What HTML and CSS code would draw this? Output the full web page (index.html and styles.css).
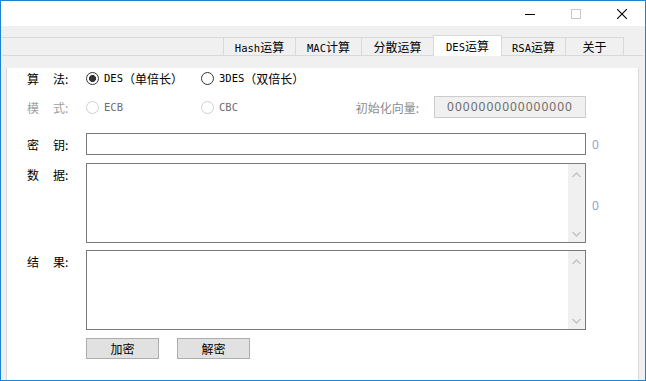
FILE: index.html
```html
<!DOCTYPE html>
<html lang="zh-CN">
<head>
    <meta charset="UTF-8">
    <meta name="viewport" content="width=device-width, initial-scale=1.0">
    <title>DES运算</title>
    <link rel="stylesheet" href="styles.css">
</head>
<body>
<div class="win">
    <div class="titlebar">
        <span class="tb-btn"><svg width="10" height="10"><path d="M0 5.5H10" stroke="#000"/></svg></span>
        <span class="tb-btn"><svg width="10" height="10"><rect x="0.5" y="0.5" width="9" height="9" fill="none" stroke="#c8c8c8"/></svg></span>
        <span class="tb-btn"><svg width="10" height="10"><path d="M0 0L10 10M10 0L0 10" stroke="#000" stroke-width="1.1"/></svg></span>
    </div>

    <div class="tabbar">
        <div class="tab-fill"></div>
        <div class="tab t-hash"><span class="en">Hash</span>运算</div>
        <div class="tab t-mac"><span class="en">MAC</span>计算</div>
        <div class="tab t-div">分散运算</div>
        <div class="tab t-des active"><span class="en">DES</span>运算</div>
        <div class="tab t-rsa"><span class="en">RSA</span>运算</div>
        <div class="tab t-about">关于</div>
        <div class="tab-end"></div>
    </div>

    <div class="panel">
        <div class="row r-alg">
            <span class="lbl"><i>算</i><i>法</i>:</span>
            <div class="field opts">
                <span class="opt"><span class="radio on"></span><span class="en">DES</span>（单倍长）</span>
                <span class="opt"><span class="radio"></span><span class="en">3DES</span>（双倍长）</span>
            </div>
        </div>

        <div class="row r-mode">
            <span class="lbl off"><i>模</i><i>式</i>:</span>
            <div class="field opts">
                <span class="opt off"><span class="radio"></span><span class="en">ECB</span></span>
                <span class="opt off"><span class="radio"></span><span class="en">CBC</span></span>
                <span class="iv-lbl">初始化向量:</span>
                <span class="iv">0000000000000000</span>
            </div>
        </div>

        <div class="row r-key">
            <span class="lbl"><i>密</i><i>钥</i>:</span>
            <div class="field input"></div>
            <span class="count">0</span>
        </div>

        <div class="row r-data">
            <span class="lbl"><i>数</i><i>据</i>:</span>
            <div class="field area">
                <div class="sbar">
                    <svg width="9" height="6"><polyline points="0.5,5 4.5,1 8.5,5" fill="none" stroke="#c4c4c4" stroke-width="1.5"/></svg>
                    <svg width="9" height="6"><polyline points="0.5,1 4.5,5 8.5,1" fill="none" stroke="#c4c4c4" stroke-width="1.5"/></svg>
                </div>
            </div>
            <span class="count mid">0</span>
        </div>

        <div class="row r-res">
            <span class="lbl"><i>结</i><i>果</i>:</span>
            <div class="field area">
                <div class="sbar">
                    <svg width="9" height="6"><polyline points="0.5,5 4.5,1 8.5,5" fill="none" stroke="#c4c4c4" stroke-width="1.5"/></svg>
                    <svg width="9" height="6"><polyline points="0.5,1 4.5,5 8.5,1" fill="none" stroke="#c4c4c4" stroke-width="1.5"/></svg>
                </div>
            </div>
        </div>

        <div class="row r-btns">
            <button class="btn">加密</button>
            <button class="btn">解密</button>
        </div>
    </div>
</div>
</body>
</html>
```

FILE: styles.css
```css
html,body{margin:0;padding:0;height:100%;width:100%;}
body{
    background:#f0f0f0;
    font-family:"Noto Sans CJK SC","Noto Sans",sans-serif;
    font-size:12px;
    color:#000;
    user-select:none;
}
.win{
    width:646px;height:381px;
    box-sizing:border-box;
    border:1px solid #1883d7;
    background:#f0f0f0;
    overflow:hidden;
}
.en{font-family:"DejaVu Sans Mono",monospace;font-size:10.5px;}

/* title bar */
.titlebar{height:25px;background:#fff;display:flex;justify-content:flex-end;}
.tb-btn{width:46px;display:flex;align-items:center;justify-content:center;}
.tb-btn svg{display:block;}

/* tabs */
.tabbar{
    display:flex;
    margin:11px 2px 0 1px;
    height:18px;
    border-bottom:1px solid #d9d9d9;
}
.tab-fill{flex:1;border-top:1px solid #d9d9d9;}
.tab-end{width:19px;flex:none;}
.tab{
    flex:none;
    box-sizing:border-box;
    text-align:center;
    line-height:17px;
    border-top:1px solid #d9d9d9;
    border-left:1px solid #d9d9d9;
    background:#f0f0f0;
    white-space:nowrap;
}
.t-hash{width:72px;}
.t-mac{width:66px;}
.t-div{width:72px;}
.t-des{width:69px;}
.t-rsa{width:63px;border-left:none;}
.t-about{width:59px;border-right:1px solid #d9d9d9;}
.tab.active{
    position:relative;
    z-index:1;
    background:#fff;
    margin:-2px 0 -1px 0;
    line-height:19px;
    border-right:1px solid #d9d9d9;
}

/* panel */
.panel{
    margin:0 6px 0 5px;
    height:317px;
    background:#fff;
    border:1px solid #d9d9d9;
    border-top:none;
    padding-left:20px;
}
.row{display:flex;align-items:center;}
.lbl{width:59px;flex:none;white-space:nowrap;}
.lbl i{font-style:normal;}
.lbl i:first-child{margin-right:14px;}
.lbl.off{color:#a0a0a0;}
.field{width:500px;flex:none;box-sizing:border-box;}
.count{margin-left:6px;color:#8fa3cb;font-family:"Noto Sans",sans-serif;}

.r-alg{margin-top:12px;height:20px;}
.r-mode{margin-top:8px;height:22px;}
.r-key{margin-top:15px;height:22px;}
.r-data{margin-top:8px;height:80px;align-items:flex-start;}
.r-res{margin-top:7px;height:80px;align-items:flex-start;}
.r-btns{margin-top:8px;padding-left:59px;gap:18px;}

.r-data .lbl,.r-res .lbl{padding-top:3px;}
.count.mid{align-self:center;margin-top:4px;}

.opts{display:flex;align-items:center;height:100%;}
.opt{width:115px;display:flex;align-items:center;white-space:nowrap;}
.opt.off{color:#6d6d6d;}
.radio{
    width:13px;height:13px;
    box-sizing:border-box;
    border:1px solid #333;
    border-radius:50%;
    background:#fff;
    margin-right:5px;
    flex:none;
}
.radio.on{background:radial-gradient(circle,#333 3.2px,#fff 3.8px);}
.opt.off .radio{border-color:#cfcfcf;}

.iv-lbl{margin-left:auto;margin-right:15px;color:#8c8c8c;}
.iv{
    width:152px;height:22px;
    box-sizing:border-box;
    border:1px solid #cccccc;
    background:#f0f0f0;
    color:#6d6d6d;
    font-family:"Noto Sans",sans-serif;
    letter-spacing:1px;
    line-height:20px;
    text-align:center;
}

.input{height:22px;border:1px solid #7a7a7a;background:#fff;}
.area{
    height:80px;
    border:1px solid #7a7a7a;
    background:#fff;
    display:flex;
    justify-content:flex-end;
}
.sbar{
    width:17px;
    background:#f0f0f0;
    display:flex;
    flex-direction:column;
    justify-content:space-between;
    align-items:center;
    padding:8px 0 5px;
}
.sbar svg{display:block;}

.btn{
    width:73px;height:21px;
    padding:0;
    border:1px solid #adadad;
    background:#e1e1e1;
    font-family:"Noto Sans CJK SC",sans-serif;
    font-size:12px;
    color:#000;
    border-radius:0;
}
```
